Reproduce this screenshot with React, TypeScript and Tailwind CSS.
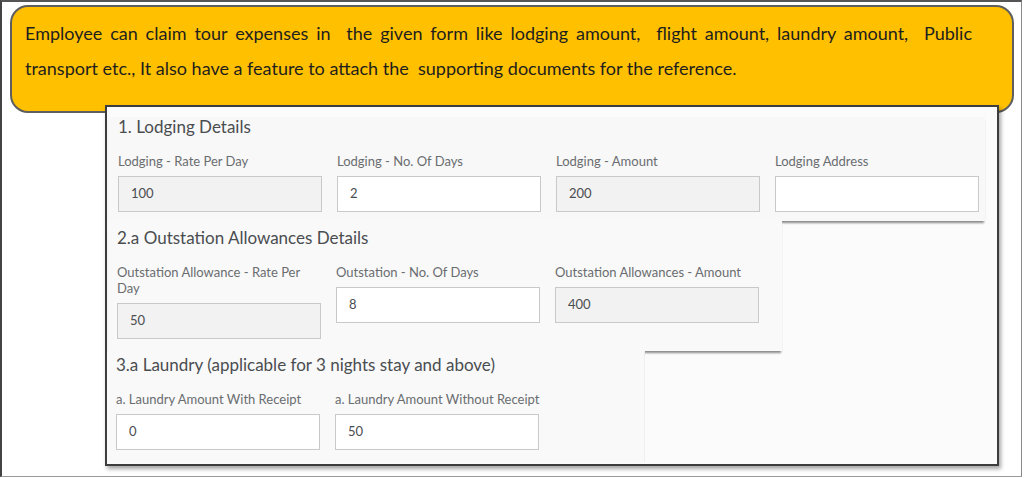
type FieldProps = {
  label: string;
  value?: string;
  readOnly?: boolean;
  nowrap?: boolean;
};

function Field({ label, value, readOnly, nowrap }: FieldProps) {
  return (
    <div className="w-[204px] flex flex-col">
      <div className={nowrap ? "text-[13px] leading-4 text-[#6a6d70] mb-[7px] whitespace-nowrap" : "text-[13px] leading-4 text-[#6a6d70] mb-[7px]"}>
        {label}
      </div>
      <div
        className={
          readOnly
            ? "h-[36px] border border-[#c9c9c9] bg-[#f2f2f2] px-3 flex items-center text-[13px] text-[#4a4d50]"
            : "h-[36px] border border-[#c9c9c9] bg-white px-3 flex items-center text-[13px] text-[#4a4d50]"
        }
      >
        {value}
      </div>
    </div>
  );
}

export default function App() {
  return (
    <div className="w-[1024px] h-[478px] bg-white font-['Lato',sans-serif]">
      <div className="w-[1022px] h-[477px] border-t-2 border-l-2 border-r border-b border-t-[#555] border-l-[#444] border-r-[#8a8a8a] border-b-[#9a9a9a] overflow-hidden">
        {/* callout */}
        <div className="ml-[8px] mt-[3px] w-[1004px] h-[108px] rounded-[18px] border-2 border-[#5e5e5e] bg-[#ffc000] pl-[13px] pr-[40px] pt-[9px] text-[18px] leading-[35px] text-[#1e1e1e]">
          <div className="text-justify [text-align-last:justify] whitespace-pre-wrap">
            {"Employee can claim tour expenses in  the given form like lodging amount,  flight amount, laundry amount,  Public"}
          </div>
          <div className="whitespace-pre-wrap">
            {"transport etc., It also have a feature to attach the  supporting documents for the reference."}
          </div>
        </div>

        {/* form screenshot */}
        <div className="relative -mt-[8px] ml-[103px] w-[894px] h-[361px] border-2 border-[#3d3d3d] bg-[#fbfbfb] shadow-[2px_3px_4px_rgba(0,0,0,0.35)] overflow-hidden">
          <div className="mt-[10px] ml-[1px] w-[877px] bg-[#f8f8f8] pl-[10px] pb-[9px] shadow-[0_3px_2px_-1px_rgba(0,0,0,0.45)]">
            <div className="text-[17px] leading-5 text-[#4a4d50]">1. Lodging Details</div>
            <div className="mt-4 flex gap-[15px] items-start">
              <Field label="Lodging - Rate Per Day" value="100" readOnly />
              <Field label="Lodging - No. Of Days" value="2" />
              <Field label="Lodging - Amount" value="200" readOnly />
              <Field label="Lodging Address" />
            </div>
          </div>

          <div className="ml-[1px] w-[674px] bg-[#f9f9f9] pl-[9px] pt-[7px] pb-[12px] shadow-[0_3px_2px_-1px_rgba(0,0,0,0.45)]">
            <div className="text-[17px] leading-5 text-[#4a4d50]">2.a Outstation Allowances Details</div>
            <div className="mt-4 flex gap-[15px] items-start">
              <Field label="Outstation Allowance - Rate Per Day" value="50" readOnly />
              <Field label="Outstation - No. Of Days" value="8" />
              <Field label="Outstation Allowances - Amount" value="400" readOnly />
            </div>
          </div>

          <div className="ml-[1px] w-[537px] bg-[#f9f9f9] pl-[8px] pt-[4px] pb-[12px] border-r border-[#efefef]">
            <div className="text-[17px] leading-5 text-[#4a4d50]">3.a Laundry (applicable for 3 nights stay and above)</div>
            <div className="mt-4 flex gap-[15px] items-start">
              <Field label="a. Laundry Amount With Receipt" value="0" nowrap />
              <Field label="a. Laundry Amount Without Receipt" value="50" nowrap />
            </div>
          </div>
        </div>
      </div>
    </div>
  );
}
